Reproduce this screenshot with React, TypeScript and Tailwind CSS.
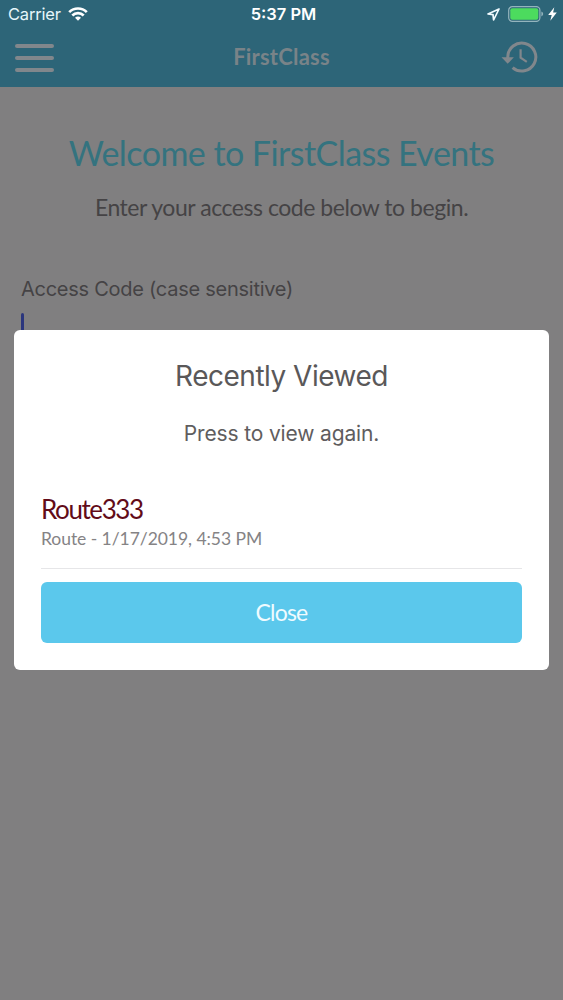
import React, { useState } from 'react';

interface RecentItem {
  id: string;
  name: string;
  kind: string;
  viewedAt: string;
}

const recentItems: RecentItem[] = [
  { id: 'route333', name: 'Route333', kind: 'Route', viewedAt: '1/17/2019, 4:53 PM' },
];

const WifiIcon = () => (
  <svg className="w-[20px] h-[14px]" viewBox="0 0 20 14" fill="none" stroke="#fff" strokeWidth="2.7">
    <path d="M1.2 5.1a12.6 12.6 0 0 1 17.6 0" />
    <path d="M4.3 8.5a8.1 8.1 0 0 1 11.4 0" />
    <path d="M10 13.8 7 10.8a4.4 4.4 0 0 1 6 0z" fill="#fff" stroke="none" />
  </svg>
);

const LocationIcon = () => (
  <svg className="w-[13px] h-[13px]" viewBox="0 0 13 13" fill="none" stroke="#f1fbff" strokeWidth="1.7" strokeLinejoin="round">
    <path d="M12 1 1 6l5 .7.6 5.3z" />
  </svg>
);

const BatteryIcon = () => (
  <svg className="w-[36px] h-[16px]" viewBox="0 0 36 16" fill="none">
    <rect x="0.7" y="0.7" width="31.2" height="14.6" rx="3.6" stroke="#94b4bd" strokeWidth="1.2" />
    <rect x="2.3" y="2.3" width="28" height="11.4" rx="2" fill="#4cdb5e" />
    <path d="M33.4 5.6q1.8.9 1.8 2.4t-1.8 2.4z" fill="#94b4bd" />
  </svg>
);

const BoltIcon = () => (
  <svg className="w-[9px] h-[14px]" viewBox="0 0 9 14" fill="#fff">
    <path d="M6.3.2.2 8h3.5L2.3 13.8 8.8 5.6H5.1z" />
  </svg>
);

const HistoryIcon = () => (
  <svg className="w-[38px] h-[34px]" viewBox="0 0 38 34" fill="none" stroke="#81878c" strokeWidth="3">
    <path d="M7.8 18.4V17A14 14 0 1 1 12.6 27.6" />
    <path d="M1.5 17.2h12.4l-6.2 6.6z" fill="#81878c" stroke="none" />
    <path d="M20.6 9.2v8.4l6.2 4.2" strokeWidth="2.2" />
  </svg>
);

const StatusBar = () => (
  <div className="grid grid-cols-3 items-center h-[29px] pl-[8px] pr-[6px] font-['Inter',sans-serif] text-white">
    <div className="flex items-center gap-[7px] pb-px">
      <span className="text-[16.5px] tracking-[-0.2px] text-[#e6f6fb]">Carrier</span>
      <WifiIcon />
    </div>
    <span className="pl-[2px] pb-px text-center text-[16.5px] font-semibold whitespace-nowrap">5:37 PM</span>
    <div className="flex items-center justify-end pb-px">
      <LocationIcon />
      <span className="w-[8px]" />
      <BatteryIcon />
      <span className="w-[4px]" />
      <BoltIcon />
    </div>
  </div>
);

const NavBar = () => (
  <div className="grid grid-cols-3 items-center h-[55px] pl-[15px] pr-[25px]">
    <button className="flex flex-col gap-[8px] w-[39px] pt-[3px]" aria-label="Menu">
      <span className="h-[4px] rounded-full bg-[#81878c]" />
      <span className="h-[4px] rounded-full bg-[#81878c]" />
      <span className="h-[4px] rounded-full bg-[#81878c]" />
    </button>
    <h1 className="pl-[10px] text-center text-[22px] font-bold tracking-[0.2px] text-[#798388] whitespace-nowrap">
      FirstClass
    </h1>
    <button className="justify-self-end" aria-label="History">
      <HistoryIcon />
    </button>
  </div>
);

const RecentlyViewed = ({ onClose }: { onClose: () => void }) => (
  <div className="absolute inset-0 flex items-center px-[14px]">
    <div className="w-full h-[340px] rounded-[6px] bg-white px-[27px] pt-[27px]">
      <h3 className="text-center text-[28px] leading-[38px] tracking-[-0.5px] text-[#5a5859] font-['Inter',sans-serif]">
        Recently Viewed
      </h3>
      <p className="mt-[24px] text-center text-[21px] leading-[30px] tracking-[-0.15px] text-[#5f5d5e] font-['Inter',sans-serif]">
        Press to view again.
      </p>
      <ul className="mt-[42px]">
        {recentItems.map((item) => (
          <li key={item.id} className="h-[78px] border-b border-[#e6e6e8]">
            <p className="text-[26px] leading-[36px] tracking-[-1.4px] text-[#620b18]">{item.name}</p>
            <p className="text-[17.5px] leading-[24px] tracking-[-0.05px] text-[#858385]">
              {item.kind} - {item.viewedAt}
            </p>
          </li>
        ))}
      </ul>
      <button
        onClick={onClose}
        className="mt-[13px] w-full h-[61px] rounded-[6px] bg-[#5bc8ec] text-[23px] tracking-[-0.8px] text-[#effbff]"
      >
        Close
      </button>
    </div>
  </div>
);

const App: React.FC = () => {
  const [showRecent, setShowRecent] = useState(true);

  return (
    <div className="relative w-[563px] h-[1000px] overflow-hidden bg-[#807f80] font-['Lato',sans-serif]">
      <header className="h-[87px] bg-[#2d6578]">
        <StatusBar />
        <NavBar />
      </header>

      <main className="pt-[44px]">
        <h2 className="text-center text-[34px] leading-[44px] tracking-[-0.55px] text-[#34737f] whitespace-nowrap">
          Welcome to FirstClass Events
        </h2>
        <p className="mt-[17px] text-center text-[23px] leading-[30px] tracking-[-0.46px] text-[#454345]">
          Enter your access code below to begin.
        </p>
        <div className="mt-[52px] px-[21px]">
          <label className="block text-[20px] leading-[30px] tracking-[-0.26px] text-[#454345] font-['Inter',sans-serif]">
            Access Code (case sensitive)
          </label>
          <div className="mt-[9px] w-[3px] h-[26px] rounded-full bg-[#2b367d]" />
        </div>
      </main>

      {showRecent && <RecentlyViewed onClose={() => setShowRecent(false)} />}
    </div>
  );
};

export default App;
